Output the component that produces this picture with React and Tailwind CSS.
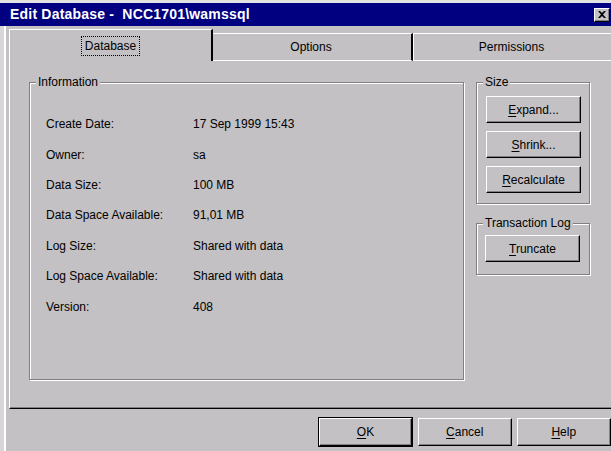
import React from "react";

const FACE = "bg-[#c3c1c4]";

function Btn({ children, className = "" }) {
  return (
    <div
      className={`flex items-center justify-center bg-[#c3c1c4] border border-t-white border-l-white border-r-black border-b-black shadow-[inset_-1px_-1px_0_#808080] text-[12px] text-black ${className}`}
    >
      {children}
    </div>
  );
}

function Mn({ k, rest }) {
  return (
    <span>
      <span className="underline underline-offset-2 decoration-1">{k}</span>
      {rest}
    </span>
  );
}

function Group({ title, className = "", children }) {
  return (
    <fieldset
      className={`border border-[#808080] shadow-[inset_1px_1px_0_#fff,1px_1px_0_#fff] px-[6px] ${className}`}
    >
      <legend className={`${FACE} px-[2px] text-[12px] leading-[14px] text-black`}>{title}</legend>
      {children}
    </fieldset>
  );
}

const rows = [
  ["Create Date:", "17 Sep 1999 15:43"],
  ["Owner:", "sa"],
  ["Data Size:", "100 MB"],
  ["Data Space Available:", "91,01 MB"],
  ["Log Size:", "Shared with data"],
  ["Log Space Available:", "Shared with data"],
  ["Version:", "408"],
];

export default function App() {
  return (
    <div
      className={`w-[611px] h-[451px] overflow-hidden ${FACE} flex flex-col font-['Liberation_Sans',Arial,sans-serif] text-black select-none`}
    >
      {/* window top edge */}
      <div className="h-[3px] bg-[#e4e3e4] shrink-0" />

      {/* caption bar */}
      <div className="h-[23px] shrink-0 bg-[#000080] flex items-center justify-between pl-[10px]">
        <span className="text-white font-bold text-[14px] tracking-[0.2px] whitespace-pre">
          {"Edit Database -  NCC1701\\wamssql"}
        </span>
        <div className="w-[16px] h-[14px] mr-[1px] bg-[#c3c1c4] border border-t-white border-l-white border-r-black border-b-black shadow-[inset_-1px_-1px_0_#808080] flex items-center justify-center">
          <svg width="8" height="7" viewBox="0 0 8 7">
            <path d="M0 0h2l2 2 2-2h2L5 3.5 8 7H6L4 5 2 7H0l3-3.5z" fill="#000" />
          </svg>
        </div>
      </div>

      {/* dialog body */}
      <div className="flex-1 flex flex-col border-l-[4px] border-[#d8d6d8]">
        <div className="flex-1 flex flex-col border-l-[2px] border-white pl-[3px]">
          {/* tab strip */}
          <div className="h-[35px] shrink-0 flex items-end w-[620px]">
            <div className="w-[204px] h-[32px] border-t border-l border-white border-r-2 border-r-black flex items-center justify-center">
              <span className="text-[12px] px-[3px] border border-dotted border-black leading-[18px]">
                Database
              </span>
            </div>
            <div className="w-[200px] h-[28px] border-t border-t-white border-b border-b-white border-r-2 border-r-black flex items-center justify-center text-[12px] pr-[2px]">
              Options
            </div>
            <div className="flex-1 h-[28px] border-t border-l border-white border-b border-b-white flex items-center justify-center text-[12px] pr-[20px]">
              Permissions
            </div>
          </div>

          {/* tab page */}
          <div className="w-[620px] h-[348px] shrink-0 border-l border-white border-b border-b-black">
            <div className="h-full border-b border-[#808080] flex pt-[14px] pl-[19px]">
              <Group title="Information" className="w-[435px] h-[305px]">
                <div className="grid grid-cols-[147px_1fr] auto-rows-[30.4px] items-center pt-[20px] pl-[10px] text-[12px]">
                  {rows.map(([k, v]) => (
                    <React.Fragment key={k}>
                      <span>{k}</span>
                      <span>{v}</span>
                    </React.Fragment>
                  ))}
                </div>
              </Group>

              <div className="ml-[12px] flex flex-col gap-[12px]">
                <Group title="Size" className="w-[114px] h-[129px]">
                  <div className="flex flex-col gap-[8px] pt-[7px] pl-[3px]">
                    <Btn className="w-[95px] h-[27px]">
                      <Mn k="E" rest="xpand..." />
                    </Btn>
                    <Btn className="w-[95px] h-[27px]">
                      <Mn k="S" rest="hrink..." />
                    </Btn>
                    <Btn className="w-[95px] h-[27px]">
                      <Mn k="R" rest="ecalculate" />
                    </Btn>
                  </div>
                </Group>
                <Group title="Transaction Log" className="w-[114px] h-[59px]">
                  <div className="pt-[5px] pl-[2px]">
                    <Btn className="w-[95px] h-[27px]">
                      <Mn k="T" rest="runcate" />
                    </Btn>
                  </div>
                </Group>
              </div>
            </div>
          </div>

          {/* command buttons */}
          <div className="flex items-start pt-[8px] pl-[309px] gap-[5px]">
            <div className="border border-black">
              <Btn className="w-[93px] h-[28px]">
                <Mn k="O" rest="K" />
              </Btn>
            </div>
            <Btn className="w-[94px] h-[28px] mt-[1px]">
              <Mn k="C" rest="ancel" />
            </Btn>
            <Btn className="w-[95px] h-[28px] mt-[1px]">
              <Mn k="H" rest="elp" />
            </Btn>
          </div>
        </div>
      </div>
    </div>
  );
}
